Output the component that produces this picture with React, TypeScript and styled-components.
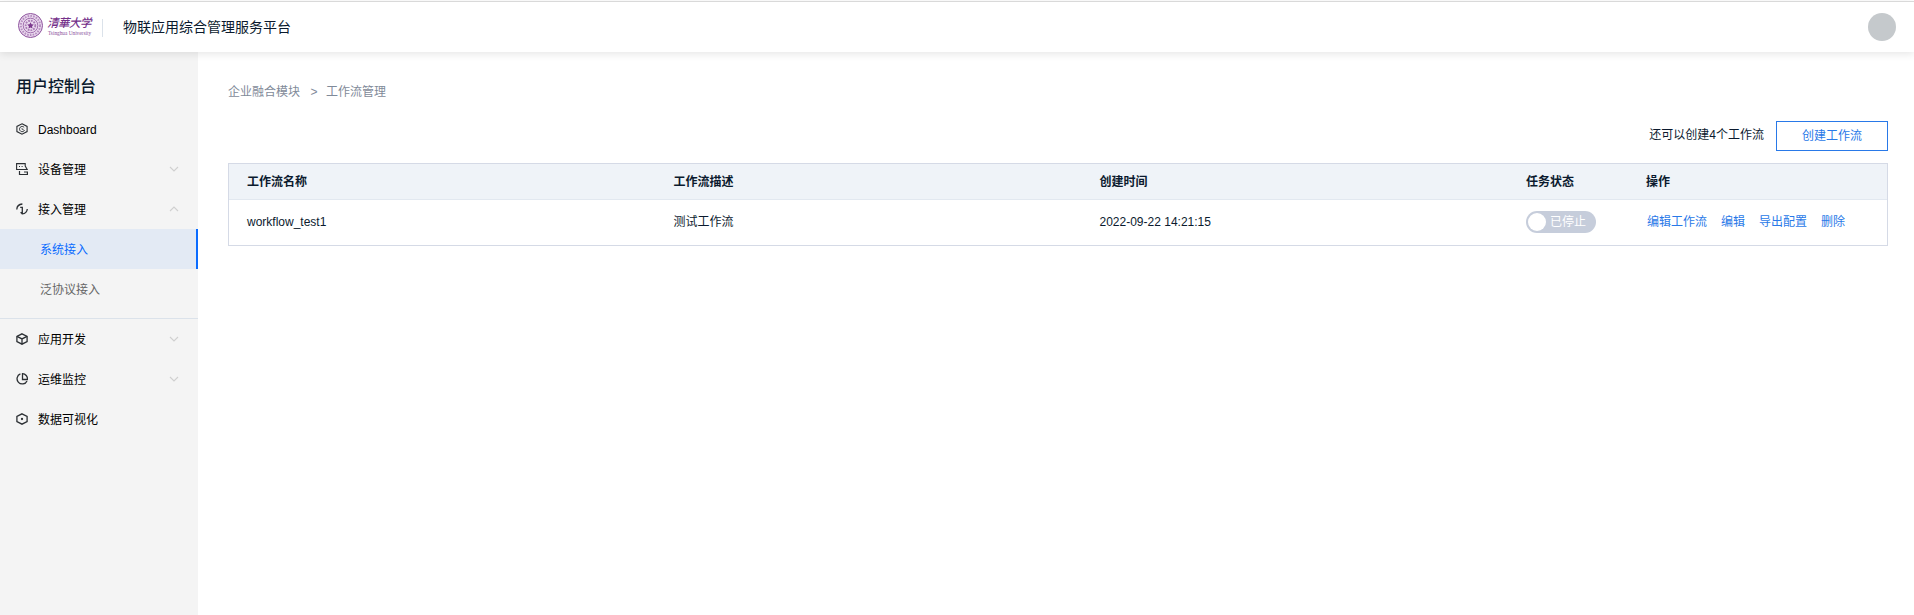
import React from "react";
import styled, { createGlobalStyle } from "styled-components";

const GlobalStyle = createGlobalStyle`
  * { box-sizing: border-box; }
  body {
    margin: 0;
    background: #fff;
    color: #0b1a2e;
    font: 12px/20px "Liberation Sans", "Noto Sans CJK SC", sans-serif;
    overflow: hidden;
  }
`;

const Page = styled.div`
  height: 100vh;
  display: flex;
  flex-direction: column;
  padding-top: 1px;
`;

const Header = styled.header`
  position: relative;
  z-index: 1;
  flex: 0 0 51px;
  display: flex;
  align-items: center;
  padding: 0 18px;
  background: #fff;
  border-top: 1px solid #d9d9d9;
  box-shadow: 0 2px 8px rgba(0, 0, 0, 0.1);
`;

const Logo = styled.div`
  display: flex;
  align-items: center;
  height: 26px;
  width: 84px;
  margin-top: -4px;
  color: #7c3a8e;
`;

const LogoText = styled.div`
  display: flex;
  flex-direction: column;
  margin-left: 4px;
`;

const LogoName = styled.span`
  font: italic 500 11.5px/16px "Noto Sans CJK JP", sans-serif;
  letter-spacing: -0.5px;
  color: #74308a;
  white-space: nowrap;
`;

const LogoLatin = styled.span`
  font: 5.3px/7px "Liberation Serif", serif;
  padding-left: 1px;
  color: #8a4f9b;
  white-space: nowrap;
`;

const AppTitle = styled.h1`
  margin: 0;
  display: flex;
  align-items: center;
  height: 18px;
  padding: 0 0 2px 20px;
  margin-top: 1px;
  border-left: 1px solid #dbe2ea;
  font-size: 14px;
  font-weight: 400;
`;

const Avatar = styled.div`
  width: 28px;
  height: 28px;
  margin-left: auto;
  border-radius: 50%;
  background: #c5c9cc;
`;

const Body = styled.div`
  flex: 1;
  display: flex;
  min-height: 0;
`;

const Sidebar = styled.aside`
  width: 198px;
  flex: none;
  background: #f4f4f4;
`;

const SidebarTitle = styled.h2`
  margin: 0;
  height: 57px;
  padding: 23px 16px 0;
  font-size: 16px;
  line-height: 24px;
  font-weight: 500;
`;

const NavItem = styled.div`
  display: flex;
  align-items: center;
  height: 40px;
  padding: 0 18px 0 16px;
  color: #000;
`;

const NavLabel = styled.span`
  flex: 1;
  margin-left: 10px;
  padding-top: 2px;
`;

const SubMenu = styled.div`
  height: 90px;
  border-bottom: 1px solid #dbe2ea;
`;

const SubItem = styled.div<{ $active?: boolean }>`
  height: 40px;
  padding-left: 40px;
  line-height: 42px;
  color: ${(p) => (p.$active ? "#0a6cff" : "#666")};
  background: ${(p) => (p.$active ? "#e3eaf4" : "transparent")};
  border-right: 2px solid ${(p) => (p.$active ? "#0a6cff" : "transparent")};
`;

const Main = styled.main`
  flex: 1;
  padding: 30px 26px 0 30px;
`;

const Breadcrumb = styled.nav`
  display: flex;
  gap: 8.5px;
  color: #7f8a99;
  span:nth-child(2) { padding-left: 2px; }
`;

const Toolbar = styled.div`
  display: flex;
  justify-content: flex-end;
  gap: 12px;
  margin: 19px 0 12px;
  line-height: 28px;
`;

const CreateButton = styled.button`
  width: 112px;
  height: 30px;
  padding: 0;
  font: inherit;
  color: #2979e8;
  background: #fff;
  border: 1px solid #2979e8;
`;

const Table = styled.div`
  border: 1px solid #d5dae6;
`;

const Row = styled.div<{ $head?: boolean }>`
  display: grid;
  grid-template-columns: 426.5px 426px 426.5px 120px 1fr;
  align-items: center;
  height: ${(p) => (p.$head ? "36px" : "45px")};
  padding-bottom: ${(p) => (p.$head ? "0" : "1px")};
  font-weight: ${(p) => (p.$head ? 700 : 400)};
  background: ${(p) => (p.$head ? "#eff3f8" : "#fff")};
  border-bottom: ${(p) => (p.$head ? "1px solid #e2e8f0" : "none")};
`;

const Cell = styled.div`
  padding-left: 18px;
`;

const Switch = styled.div`
  display: flex;
  align-items: center;
  gap: 4px;
  width: 70px;
  height: 22px;
  padding: 0 2px;
  border-radius: 11px;
  color: #fff;
  background: #c6cddb;
`;

const Knob = styled.span`
  width: 18px;
  height: 18px;
  border-radius: 50%;
  background: #fff;
`;

const Actions = styled.div`
  display: flex;
  gap: 14px;
  padding-left: 1px;
`;

const Action = styled.a`
  color: #2979e8;
`;

const Glyph = styled.svg`
  flex: none;
  fill: none;
  stroke: #2b2f33;
  stroke-width: 1.3;
`;

const ChevronSvg = styled.svg<{ $up?: boolean }>`
  fill: none;
  stroke: #d0d0d0;
  stroke-width: 1.1;
  transform: ${(p) => (p.$up ? "rotate(180deg)" : "none")};
`;

const Chevron = ({ up }: { up?: boolean }) => (
  <ChevronSvg $up={up} width="12" height="8" viewBox="0 0 12 8">
    <path d="M2 2l4 4 4-4" />
  </ChevronSvg>
);

const HEX = "M6 .8L11.1 3.4v5.2L6 11.2 .9 8.6V3.4z";

const icons: Record<string, React.ReactNode> = {
  dashboard: (
    <>
      <path d={HEX} strokeWidth="1.1" />
      <path d="M8.2 4.5A2.6 2.6 0 1 0 8.5 7.1" strokeWidth="1" />
      <path d="M6 5v1.4h1.7" strokeWidth=".7" />
    </>
  ),
  device: (
    <>
      <path d="M.6 .6h8.6v2.4L11.2 6.5H.6zM3 3.5h1M5.6 3.5h1" strokeWidth="1.1" />
      <path d="M3.5 8v3.5h7.9V9H8" strokeWidth="1.2" />
    </>
  ),
  access: <path d="M.8 6.4C.9 3.4 3 1.3 6.4 1M4.2 4.3h2.1v6.6c2.9-.3 4.7-2 5-4.9M6.3 10.9L4.6 9.2" />,
  app: (
    <>
      <path d={HEX} />
      <path d="M1 3.4l5 2.5 5-2.5M6 5.9v5.3" />
    </>
  ),
  monitor: (
    <>
      <path d="M4.4 .9A5.2 5.2 0 1 0 11 7.9" />
      <path d="M6.5 .7v5.8h4.9A5.2 5.2 0 0 0 6.5.7z" />
    </>
  ),
  data: (
    <>
      <path d={HEX} />
      <circle cx="6" cy="6" r=".5" />
    </>
  ),
};

type NavProps = { icon: string; label: string; arrow?: "up" | "down" };

const Nav = ({ icon, label, arrow }: NavProps) => (
  <NavItem>
    <Glyph width="12" height="12" viewBox="0 0 12 12">
      {icons[icon]}
    </Glyph>
    <NavLabel>{label}</NavLabel>
    {arrow && <Chevron up={arrow === "up"} />}
  </NavItem>
);

const Seal = () => (
  <svg width="25" height="25" viewBox="0 0 25 25" fill="none" stroke="#8d529d">
    <circle cx="12.5" cy="12.5" r="12" fill="#ead9ee" strokeWidth="1" />
    <circle cx="12.5" cy="12.5" r="9.6" strokeWidth="2" strokeDasharray="1.6 1.2" opacity=".55" />
    <circle cx="12.5" cy="12.5" r="7.3" strokeWidth=".8" />
    <circle cx="12.5" cy="12.5" r="4.8" strokeWidth="1.8" strokeDasharray="1.8 1" opacity=".7" />
    <path
      d="M12.5 9.2l1 2.1 2.3.3-1.7 1.6.4 2.3-2-1.1-2 1.1.4-2.3-1.7-1.6 2.3-.3z"
      fill="#7c3a8e"
      stroke="none"
    />
  </svg>
);

export default function App() {
  return (
    <Page>
      <GlobalStyle />
      <Header>
        <Logo>
          <Seal />
          <LogoText>
            <LogoName>清華大学</LogoName>
            <LogoLatin>Tsinghua University</LogoLatin>
          </LogoText>
        </Logo>
        <AppTitle>物联应用综合管理服务平台</AppTitle>
        <Avatar />
      </Header>
      <Body>
        <Sidebar>
          <SidebarTitle>用户控制台</SidebarTitle>
          <Nav icon="dashboard" label="Dashboard" />
          <Nav icon="device" label="设备管理" arrow="down" />
          <Nav icon="access" label="接入管理" arrow="up" />
          <SubMenu>
            <SubItem $active>系统接入</SubItem>
            <SubItem>泛协议接入</SubItem>
          </SubMenu>
          <Nav icon="app" label="应用开发" arrow="down" />
          <Nav icon="monitor" label="运维监控" arrow="down" />
          <Nav icon="data" label="数据可视化" />
        </Sidebar>
        <Main>
          <Breadcrumb>
            <span>企业融合模块</span>
            <span>&gt;</span>
            <span>工作流管理</span>
          </Breadcrumb>
          <Toolbar>
            <span>还可以创建4个工作流</span>
            <CreateButton>创建工作流</CreateButton>
          </Toolbar>
          <Table>
            <Row $head>
              <Cell>工作流名称</Cell>
              <Cell>工作流描述</Cell>
              <Cell>创建时间</Cell>
              <Cell>任务状态</Cell>
              <Cell>操作</Cell>
            </Row>
            <Row>
              <Cell>workflow_test1</Cell>
              <Cell>测试工作流</Cell>
              <Cell>2022-09-22 14:21:15</Cell>
              <Cell>
                <Switch>
                  <Knob />
                  已停止
                </Switch>
              </Cell>
              <Cell>
                <Actions>
                  <Action>编辑工作流</Action>
                  <Action>编辑</Action>
                  <Action>导出配置</Action>
                  <Action>删除</Action>
                </Actions>
              </Cell>
            </Row>
          </Table>
        </Main>
      </Body>
    </Page>
  );
}
